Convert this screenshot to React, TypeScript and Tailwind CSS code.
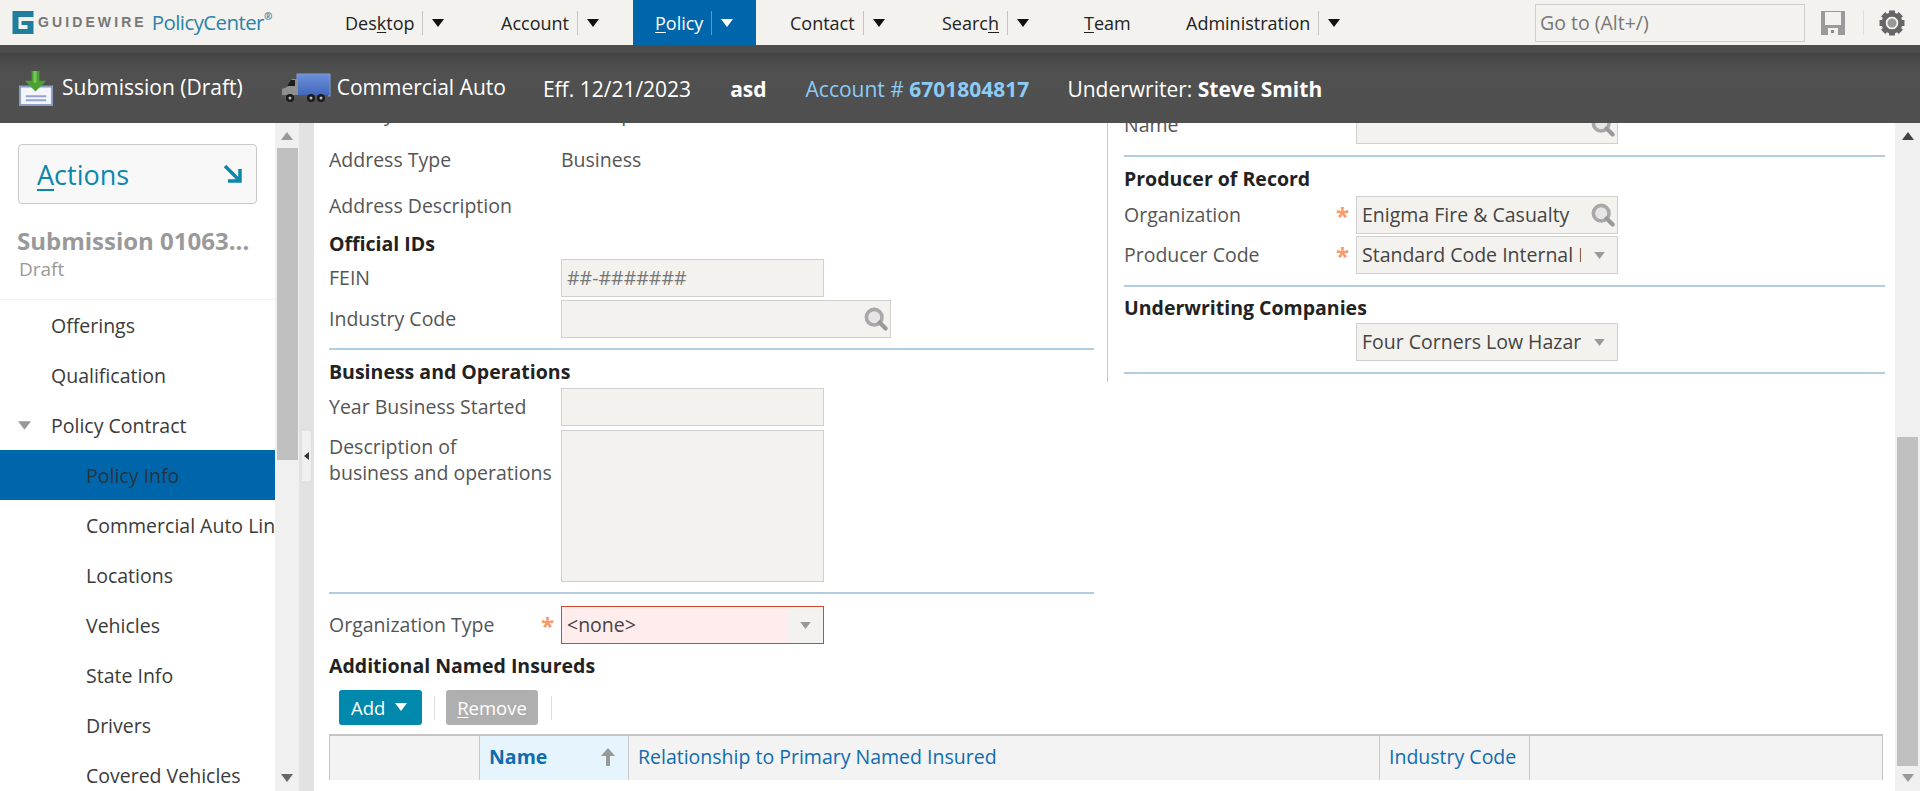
import React from "react";

const font = { fontFamily: '"Open Sans", sans-serif' };

function Caret({ className }: { className: string }) {
  return (
    <svg width="12" height="8" viewBox="0 0 12 8" className={className}>
      <path d="M0 0h12L6 8z" fill="currentColor" />
    </svg>
  );
}

function NavItem({ label, u, w, ml = "", menu = true, active = false }: { label: string; u: number; w: string; ml?: string; menu?: boolean; active?: boolean }) {
  const text = (
    <span className="pt-[2px]">
      {label.slice(0, u)}
      <span className="underline underline-offset-2">{label[u]}</span>
      {label.slice(u + 1)}
    </span>
  );
  return (
    <div className={`flex items-center h-[45px] shrink-0 ${w} ${ml} ${active ? "bg-[#0066ab] text-white pl-[22px]" : "text-[#222]"}`}>
      {u >= 0 ? text : <span className="pt-[2px]">{label}</span>}
      {menu && (
        <>
          <span className={`w-px h-[24px] ml-[8px] ${active ? "bg-[#5d9bc7]" : "bg-[#c5c5c5]"}`} />
          <Caret className={`ml-[9px] ${active ? "text-white" : "text-[#111]"}`} />
        </>
      )}
    </div>
  );
}

function Logo() {
  return (
    <div className="flex items-center pl-[12px] w-[345px] shrink-0">
      <svg width="22" height="23" viewBox="0 0 21 23" className="shrink-0">
        <path d="M0 0h21v6H6v12h9v-4H9v-4h12v13H0z" fill="#1f7d9e" />
      </svg>
      <span className="ml-[4px] text-[14px] font-bold tracking-[3.1px] text-[#777]" style={{ fontFamily: '"Liberation Sans", sans-serif' }}>GUIDEWIRE</span>
      <span className="ml-[5px] text-[20.5px] tracking-[-0.6px] text-[#2a83a8] leading-none">PolicyCenter</span>
      <span className="text-[10px] text-[#2a83a8] font-bold -mt-[12px]">®</span>
    </div>
  );
}

function SubmissionIcon() {
  return (
    <svg width="36" height="35" viewBox="0 0 37 36" className="shrink-0">
      <path d="M1 15h35v21H1z" fill="#8a9cc4" />
      <path d="M3 17h31v17H3z" fill="#f3f5fb" />
      <path d="M8 25h21v2H8zM8 29h21v2H8z" fill="#93a5cc" />
      <path d="M14 0h8v10h7L18 21 7 10h7z" fill="#4aa331" />
      <path d="M16 0h3v12h-3z" fill="#7cc45f" />
    </svg>
  );
}

function TruckIcon() {
  return (
    <svg width="50" height="30" viewBox="0 0 50 30" className="shrink-0">
      <defs>
        <linearGradient id="box" x1="0" y1="0" x2="0" y2="1">
          <stop offset="0" stopColor="#6d90d8" />
          <stop offset="1" stopColor="#3f66bd" />
        </linearGradient>
      </defs>
      <rect x="16" y="1" width="33" height="22" fill="url(#box)" stroke="#7e9bd4" />
      <path d="M1 24v-8l5-2 5-8h6v18z" fill="#8f8f8f" />
      <path d="M6 13l4-6h4v6z" fill="#1d1d1d" />
      <rect x="0" y="22" width="47" height="3" fill="#555" />
      <circle cx="9" cy="25" r="4" fill="#1a1a1a" />
      <circle cx="30" cy="25" r="4" fill="#1a1a1a" />
      <circle cx="40" cy="25" r="4" fill="#1a1a1a" />
      <circle cx="9" cy="25" r="1.5" fill="#bbb" />
      <circle cx="30" cy="25" r="1.5" fill="#bbb" />
      <circle cx="40" cy="25" r="1.5" fill="#bbb" />
    </svg>
  );
}

function Gear() {
  return (
    <svg width="26" height="26" viewBox="0 0 26 26">
      <g fill="#666">
        {[0, 45, 90, 135, 180, 225, 270, 315].map((a) => (
          <rect key={a} x="10" y="0.5" width="6" height="6" transform={`rotate(${a} 13 13)`} />
        ))}
      </g>
      <circle cx="13" cy="13" r="8.5" fill="none" stroke="#666" strokeWidth="4" />
      <circle cx="13" cy="13" r="4.5" fill="#999" />
    </svg>
  );
}

function TopBar() {
  return (
    <div className="flex items-center h-[45px] bg-[#f3f2ee] text-[18px] shrink-0">
      <Logo />
      <NavItem label="Desktop" u={3} w="w-[156px]" />
      <NavItem label="Account" u={-1} w="w-[132px]" />
      <NavItem label="Policy" u={0} w="w-[123px]" active />
      <NavItem label="Contact" u={-1} w="w-[152px]" ml="ml-[34px]" />
      <NavItem label="Search" u={5} w="w-[142px]" />
      <NavItem label="Team" u={0} w="w-[102px]" menu={false} />
      <NavItem label="Administration" u={-1} w="w-[349px]" />
      <div className="w-[270px] h-[38px] shrink-0 border border-[#cdcdcb] flex items-center pl-[4px] text-[19.5px] text-[#777]">Go to (Alt+/)</div>
      <svg width="24" height="24" viewBox="0 0 24 24" className="ml-[16px] shrink-0">
        <path d="M0 0h24v24H0z" fill="#9a9a9a" />
        <path d="M4 1h16v13H4z" fill="#f3f2ee" />
        <path d="M7 17h10v7H7z" fill="#f3f2ee" />
        <path d="M10 19h3v3h-3z" fill="#8a8a8a" />
      </svg>
      <span className="w-px h-[24px] bg-[#ddd] ml-[18px] shrink-0" />
      <div className="ml-[15px]"><Gear /></div>
    </div>
  );
}

function Header() {
  return (
    <div className="h-[78px] shrink-0 bg-[#4f4f4f] bg-gradient-to-b from-[#444] from-0% via-[#505050] via-[25%] to-[#4f4f4f] border-t-[8px] border-[#4c4c4c] text-white text-[21px] flex items-center pl-[18px] whitespace-nowrap">
      <SubmissionIcon />
      <span className="ml-[8px]">Submission (Draft)</span>
      <div className="ml-[38px]"><TruckIcon /></div>
      <span className="ml-[6px]">Commercial Auto</span>
      <span className="ml-[37px] mt-[4px]">Eff. 12/21/2023</span>
      <span className="ml-[39px] mt-[4px] font-bold">asd</span>
      <span className="ml-[39px] mt-[4px] text-[#8ccbf5]">Account # <b>6701804817</b></span>
      <span className="ml-[38px] mt-[4px]">Underwriter: <b>Steve Smith</b></span>
    </div>
  );
}

function SideRow({ label, indent = false, active = false, tri = false }: { label: string; indent?: boolean; active?: boolean; tri?: boolean }) {
  return (
    <div className={`relative h-[50px] shrink-0 flex items-center overflow-hidden whitespace-nowrap pt-[2px] ${indent ? "pl-[86px]" : "pl-[51px]"} ${active ? "bg-[#0066ab] text-[#26333f]" : "text-[#3a3a3a]"}`}>
      {tri && <Caret className="absolute left-[18px] top-[21px] text-[#999] w-[13px] h-[9px]" />}
      {label}
    </div>
  );
}

function Sidebar() {
  return (
    <div className="w-[275px] shrink-0 bg-white flex flex-col overflow-hidden text-[19.5px]">
      <div className="mt-[21px] mx-[18px] h-[60px] shrink-0 rounded border border-[#c8c8c8] bg-[#f8f8f8] flex items-center justify-between pl-[18px] pr-[13px] text-[27px] text-[#0b87ab]">
        <span className="pt-[2px]"><span className="underline underline-offset-4">A</span>ctions</span>
        <svg width="20" height="20" viewBox="0 0 20 20">
          <path d="M2 2l14 14M17 5v12H5" fill="none" stroke="#0b87ab" strokeWidth="3.5" />
        </svg>
      </div>
      <div className="mt-[23px] pl-[17px] text-[24px] leading-[28px] font-bold text-[#999] whitespace-nowrap">Submission 01063...</div>
      <div className="mt-[2px] pl-[19px] text-[19px] leading-[24px] text-[#999]">Draft</div>
      <div className="mt-[18px] h-px shrink-0 bg-[#eee]" />
      <SideRow label="Offerings" />
      <SideRow label="Qualification" />
      <SideRow label="Policy Contract" tri />
      <SideRow label="Policy Info" indent active />
      <SideRow label="Commercial Auto Line" indent />
      <SideRow label="Locations" indent />
      <SideRow label="Vehicles" indent />
      <SideRow label="State Info" indent />
      <SideRow label="Drivers" indent />
      <SideRow label="Covered Vehicles" indent />
    </div>
  );
}

function ScrollBar({ w, height, mt, upColor, downColor }: { w: string; height: string; mt: string; upColor: string; downColor: string }) {
  return (
    <div className={`relative shrink-0 bg-[#f0f0f0] flex flex-col items-center ${w}`}>
      <Caret className={`absolute top-[9px] left-1/2 -ml-[6px] rotate-180 ${upColor}`} />
      <div className={`w-[21px] bg-[#c0c0c0] ${height} ${mt}`} />
      <Caret className={`absolute bottom-[9px] left-1/2 -ml-[6px] ${downColor}`} />
    </div>
  );
}

function Splitter() {
  return (
    <div className="w-[15px] shrink-0 bg-[#e2e2e2] flex items-start justify-center pt-[307px]">
      <div className="w-[11px] h-[52px] bg-[#f0f0f0] border border-[#e0e0e0] flex items-center justify-center">
        <svg width="5" height="8" viewBox="0 0 5 8"><path d="M5 0v8L0 4z" fill="#333" /></svg>
      </div>
    </div>
  );
}

function Divider({ className }: { className: string }) {
  return <div className={`h-[2px] shrink-0 bg-[#b2cce0] ${className}`} />;
}

function Lens() {
  return (
    <svg width="24" height="24" viewBox="0 0 20 20" className="shrink-0">
      <circle cx="8.5" cy="8.5" r="6.5" fill="#e6e6e6" stroke="#a8a8a8" strokeWidth="3" />
      <path d="M13 13l5 5" stroke="#999" strokeWidth="3.5" strokeLinecap="round" />
    </svg>
  );
}

function Input({ w, h = "h-[38px]", value, icon, error = false, placeholder = false }: { w: string; h?: string; value?: string; icon?: "lens" | "drop"; error?: boolean; placeholder?: boolean }) {
  return (
    <div className={`${w} ${h} shrink-0 border flex items-center overflow-hidden whitespace-nowrap ${error ? "border-[#cf4a2d] bg-[#ffecec]" : "border-[#cfcfcd] bg-[#f3f2ee]"}`}>
      <span className={`ml-[5px] flex-1 min-w-0 overflow-hidden ${placeholder ? "text-[#777]" : "text-[#444]"}`}>{value}</span>
      {icon === "lens" && <span className="pr-[2px] flex items-center"><Lens /></span>}
      {icon === "drop" && (
        <span className={`h-full w-[36px] shrink-0 flex items-center justify-center ${error ? "bg-[#f3f2ee]" : ""}`}>
          <Caret className="text-[#999] w-[13px] h-[7px]" />
        </span>
      )}
    </div>
  );
}

function Star() {
  return <span className="text-[#f79a6e] text-[24px] font-bold leading-none w-[15px] text-center pt-[2px]">*</span>;
}

function Field({ label, star = false, mt, children }: { label: string; star?: boolean; mt: string; children?: React.ReactNode }) {
  return (
    <div className={`flex items-center h-[38px] shrink-0 ${mt} text-[#555]`}>
      <div className="w-[232px] shrink-0 flex items-center justify-between pr-[6px]">
        <span>{label}</span>
        {star && <Star />}
      </div>
      {children}
    </div>
  );
}

function Heading({ children, className }: { children: React.ReactNode; className: string }) {
  return <div className={`font-bold text-[#222] leading-[24px] shrink-0 ${className}`}>{children}</div>;
}

function LeftForm() {
  return (
    <div className="w-[765px] shrink-0 flex flex-col">
      <Field label="County" mt="-mt-[28px]"><span className="text-[#555]">Hennepin</span></Field>
      <Field label="Address Type" mt="mt-[8px]"><span className="text-[#555]">Business</span></Field>
      <Field label="Address Description" mt="mt-[8px]" />
      <Heading className="mt-[7px]">Official IDs</Heading>
      <Field label="FEIN" mt="mt-[3px]"><Input w="w-[263px]" value="##-#######" placeholder /></Field>
      <Field label="Industry Code" mt="mt-[3px]"><Input w="w-[330px]" icon="lens" /></Field>
      <Divider className="mt-[10px]" />
      <Heading className="mt-[10px]">Business and Operations</Heading>
      <Field label="Year Business Started" mt="mt-[4px]"><Input w="w-[263px]" /></Field>
      <div className="flex mt-[4px] text-[#555] shrink-0">
        <div className="w-[232px] shrink-0 leading-[26px] pt-[4px]">Description of<br />business and operations</div>
        <Input w="w-[263px]" h="h-[152px]" />
      </div>
      <Divider className="mt-[10px]" />
      <Field label="Organization Type" star mt="mt-[12px]"><Input w="w-[263px]" value="<none>" icon="drop" error /></Field>
      <Heading className="mt-[10px]">Additional Named Insureds</Heading>
    </div>
  );
}

function RightForm() {
  return (
    <div className="flex-1 ml-[16px] flex flex-col">
      <Field label="Name" mt="-mt-[17px]"><Input w="w-[262px]" icon="lens" /></Field>
      <Divider className="mt-[11px]" />
      <Heading className="mt-[10px]">Producer of Record</Heading>
      <Field label="Organization" star mt="mt-[5px]"><Input w="w-[262px]" value="Enigma Fire & Casualty" icon="lens" /></Field>
      <Field label="Producer Code" star mt="mt-[2px]"><Input w="w-[262px]" value="Standard Code Internal Producer" icon="drop" /></Field>
      <Divider className="mt-[11px]" />
      <Heading className="mt-[9px]">Underwriting Companies</Heading>
      <Field label="" mt="mt-[3px]"><Input w="w-[262px]" value="Four Corners Low Hazard" icon="drop" /></Field>
      <Divider className="mt-[11px]" />
    </div>
  );
}

function Th({ w, children, sorted = false }: { w: string; children?: React.ReactNode; sorted?: boolean }) {
  return (
    <div className={`${w} h-full shrink-0 border-r border-[#c8c8c8] flex items-center pl-[9px] pb-[2px] text-[#0f6cb0] whitespace-nowrap ${sorted ? "bg-[#e6f4fd] font-bold" : ""}`}>
      {children}
    </div>
  );
}

function Content() {
  return (
    <div className="flex-1 min-w-0 bg-white pl-[15px] pr-[10px] flex flex-col overflow-hidden text-[19.5px]">
      <div className="flex items-start shrink-0">
        <LeftForm />
        <div className="w-px h-[259px] bg-[#b2cce0] ml-[13px] shrink-0" />
        <RightForm />
      </div>
      <div className="flex items-center mt-[12px] h-[35px] pl-[10px] shrink-0">
        <div className="w-[83px] h-[35px] rounded-[3px] bg-[#0088ad] text-white text-[18.5px] flex items-center pl-[12px]">
          Add<Caret className="ml-[10px] mb-[1px]" />
        </div>
        <span className="w-px h-[24px] bg-[#ddd] ml-[12px]" />
        <div className="ml-[11px] w-[92px] h-[35px] rounded-[3px] bg-[#afafaf] text-white text-[18.5px] flex items-center justify-center">
          <span><span className="underline underline-offset-2">R</span>emove</span>
        </div>
        <span className="w-px h-[24px] bg-[#ddd] ml-[13px]" />
      </div>
      <div className="flex h-[46px] mt-[9px] shrink-0 bg-[#f3f3f3] border-t-2 border-l border-r border-[#c4c4c4] w-[1554px] overflow-hidden">
        <Th w="w-[150px]" />
        <Th w="w-[149px]" sorted>
          <span>Name</span>
          <svg width="16" height="20" viewBox="0 0 16 20" className="ml-[53px] shrink-0"><path d="M8 1l7 8h-5v10H6V9H1z" fill="#999" /></svg>
        </Th>
        <Th w="w-[751px]">Relationship to Primary Named Insured</Th>
        <Th w="w-[150px]">Industry Code</Th>
      </div>
    </div>
  );
}

export default function App() {
  return (
    <div className="w-[1920px] h-[791px] flex flex-col overflow-hidden bg-white" style={font}>
      <TopBar />
      <Header />
      <div className="flex flex-1 min-h-0">
        <Sidebar />
        <ScrollBar w="w-[24px]" height="h-[312px]" mt="mt-[25px]" upColor="text-[#999]" downColor="text-[#666]" />
        <Splitter />
        <Content />
        <ScrollBar w="w-[25px]" height="h-[329px]" mt="mt-[314px]" upColor="text-[#444]" downColor="text-[#999]" />
      </div>
    </div>
  );
}
